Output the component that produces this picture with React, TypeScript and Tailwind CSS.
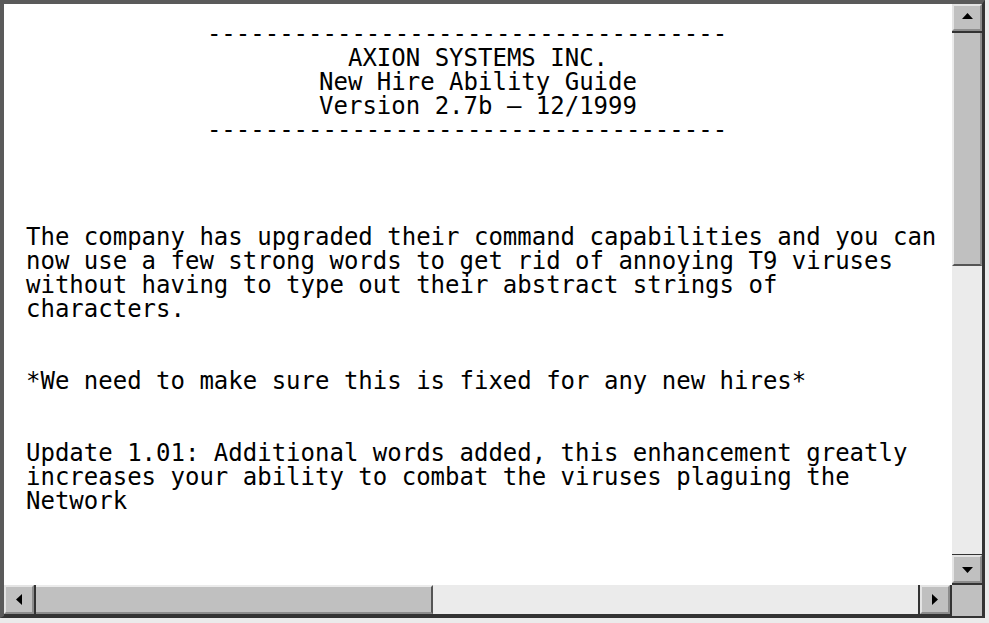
import React from 'react';

// Win95-style read-only text viewer with scrollbars

const rule = '------------------------------------';

const headerLines = [
  'AXION SYSTEMS INC.',
  'New Hire Ability Guide',
  'Version 2.7b – 12/1999',
];

const bodyLines = [
  'The company has upgraded their command capabilities and you can',
  'now use a few strong words to get rid of annoying T9 viruses',
  'without having to type out their abstract strings of',
  'characters.',
  '',
  '',
  '*We need to make sure this is fixed for any new hires*',
  '',
  '',
  'Update 1.01: Additional words added, this enhancement greatly',
  'increases your ability to combat the viruses plaguing the',
  'Network',
];

const Arrow = ({ dir }: { dir: 'up' | 'down' | 'left' | 'right' }) => {
  const vertical = dir === 'up' || dir === 'down';
  const points = {
    up: '0,6 11,6 5.5,0',
    down: '0,0 11,0 5.5,6',
    left: '6,0 6,11 0,5.5',
    right: '0,0 0,11 6,5.5',
  }[dir];
  return (
    <svg width={vertical ? 11 : 6} height={vertical ? 6 : 11} viewBox={vertical ? '0 0 11 6' : '0 0 6 11'}>
      <polygon points={points} fill="#000" />
    </svg>
  );
};

const ScrollButton = ({ dir, className }: { dir: 'up' | 'down' | 'left' | 'right'; className: string }) => (
  <div
    className={`flex items-center justify-center bg-[#c0c0c0] border-t-2 border-l-2 border-t-[#e4e4e4] border-l-[#e4e4e4] border-r-2 border-b-2 border-r-[#8c8c8c] border-b-[#8c8c8c] ${className}`}
  >
    <Arrow dir={dir} />
  </div>
);

export default function App() {
  return (
    <div className="w-[989px] h-[623px] bg-[#ebebeb] overflow-hidden">
      <div className="w-[985px] h-[618px] flex flex-col border-t-4 border-l-4 border-t-[#5a5a5a] border-l-[#5a5a5a] border-r-[3px] border-b-2 border-r-[#333] border-b-[#333]">
        <div className="flex h-[581px]">
          <div
            className="w-[948px] h-full bg-white text-black text-[24px] leading-[24px] pt-[18px] overflow-hidden"
            style={{ fontFamily: '"DejaVu Sans Mono", "Liberation Mono", monospace' }}
          >
            <div className="text-center">
              <div className="whitespace-pre h-[24px] pr-[22px]">{rule}</div>
              {headerLines.map((line, i) => (
                <div key={i} className="whitespace-pre h-[24px]">{line}</div>
              ))}
              <div className="whitespace-pre h-[24px] pr-[22px]">{rule}</div>
            </div>
            <div className="pl-[22px] mt-[83px]">
              {bodyLines.map((line, i) => (
                <div key={i} className="whitespace-pre h-[24px]">{line}</div>
              ))}
            </div>
          </div>

          {/* vertical scrollbar */}
          <div className="w-[30px] h-full flex flex-col bg-[#ebebeb]">
            <ScrollButton dir="up" className="h-[27px] pb-[3px]" />
            <div className="h-[2px] bg-[#333]" />
            <div className="h-[233px] bg-[#c0c0c0] border-l-2 border-l-[#ebebeb] border-r-2 border-r-[#8c8c8c] border-b-2 border-b-[#555]" />
            <div className="flex-1" />
            <div className="h-[1px] bg-[#333]" />
            <ScrollButton dir="down" className="h-[28px] pt-[2px]" />
            <div className="h-[2px] bg-[#333]" />
          </div>
        </div>

        {/* horizontal scrollbar */}
        <div className="flex flex-1">
          <div className="w-[948px] h-full flex bg-[#ebebeb] border-b-2 border-b-[#333]">
            <ScrollButton dir="left" className="w-[30px] h-full" />
            <div className="w-[2px] bg-[#333]" />
            <div className="w-[397px] bg-[#c0c0c0] border-t-2 border-t-[#ebebeb] border-b-2 border-b-[#8c8c8c] border-r-2 border-r-[#555]" />
            <div className="flex-1" />
            <div className="w-[2px] bg-[#333]" />
            <ScrollButton dir="right" className="w-[30px] h-full" />
            <div className="w-[2px] bg-[#333]" />
          </div>
          <div className="flex-1 bg-[#c0c0c0]" />
        </div>
      </div>
    </div>
  );
}
